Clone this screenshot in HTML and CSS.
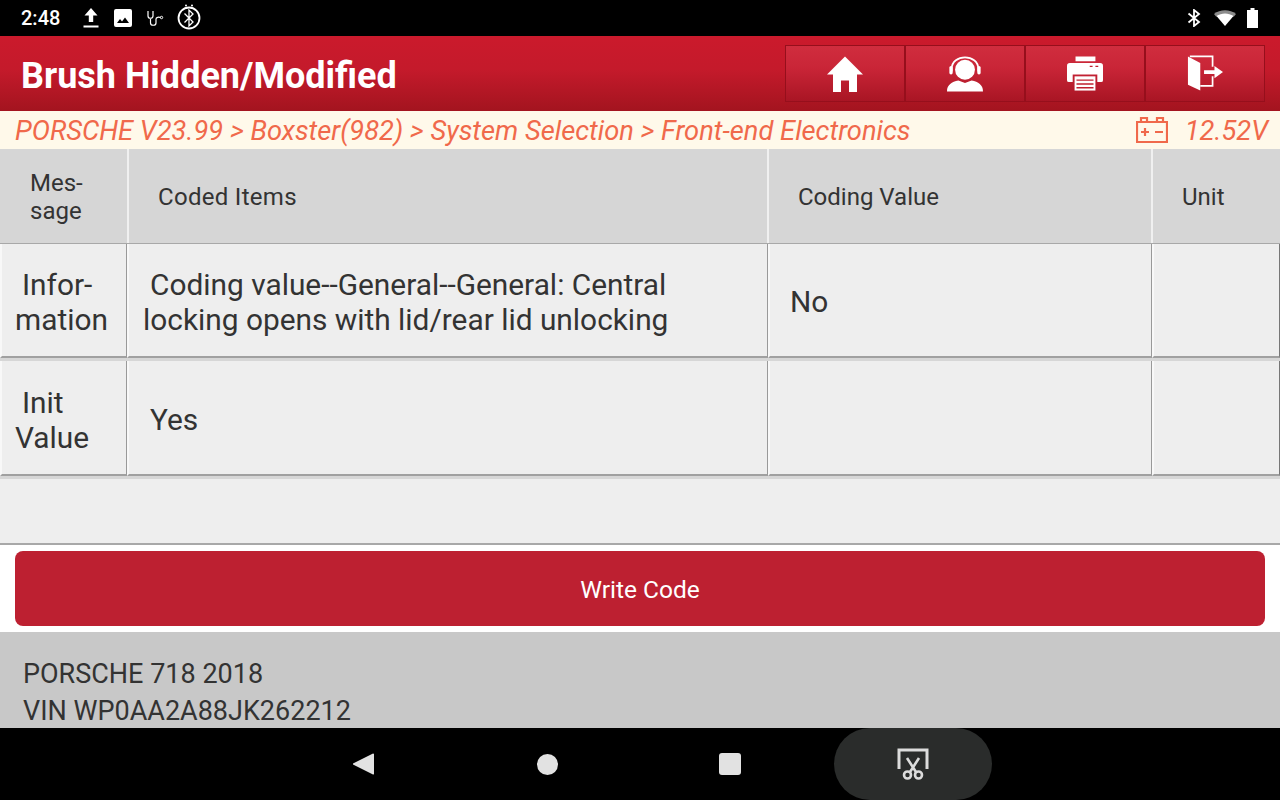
FILE: index.html
```html
<!DOCTYPE html>
<html lang="en">
<head>
<meta charset="utf-8">
<title>Brush Hidden/Modified</title>
<link rel="stylesheet" href="styles.css">
</head>
<body>
<div class="screen">
  <div class="status">
    <span class="clock">2:48</span>
    <svg class="si upload" viewBox="0 0 18 20"><path fill="#fff" d="M9 0 15.500 7.500H11.200V14H6.800V7.500H2.500ZM1.500 17.500H16.500V19.500H1.500Z"/></svg>
    <svg class="si photo" viewBox="0 0 18 18"><path fill="#fff" fill-rule="evenodd" d="M2 0H16A2 2 0 0 1 18 2V16A2 2 0 0 1 16 18H2A2 2 0 0 1 0 16V2A2 2 0 0 1 2 0ZM3 14H15L11 8.500 8 12.500 6 10Z"/></svg>
    <svg class="si steth" viewBox="0 0 18 18"><path fill="none" stroke="#fff" stroke-width="1.200" d="M2 2V7C2 10 7 10 7 7V2M4.500 10V14C4.500 17 10 17 10 14V10C10 8 13 8 14.500 8.500"/><circle cx="15.500" cy="8.500" r="1.200" fill="none" stroke="#fff"/></svg>
    <svg class="si bt-ring" viewBox="0 0 24 26"><circle cx="12" cy="14" r="10.500" fill="none" stroke="#fff" stroke-width="1.800"/><path fill="none" stroke="#fff" stroke-width="1.300" d="M7.500 9.500 16 18 12 22V6L16 10 7.500 18.500"/><circle cx="9" cy="1.500" r="1" fill="#fff"/><circle cx="15" cy="1.500" r="1" fill="#fff"/></svg>
    <span class="grow"></span>
    <svg class="si bt" viewBox="0 0 13 18"><path fill="none" stroke="#fff" stroke-width="1.800" d="M1 4.500 11.500 13 6.500 17V1L11.500 5 1 13.500"/></svg>
    <svg class="si wifi" viewBox="0 0 22 16"><path fill="#8c8c8c" d="M0 4C6-1 16-1 22 4L20 6.500H2Z"/><path fill="#fff" d="M2.500 6C7.500 2.500 14.500 2.500 19.500 6L11 16Z"/></svg>
    <svg class="si batt" viewBox="0 0 11 20"><path fill="#fff" d="M3.500 0H7.500V2H11V20H0V2H3.500Z"/></svg>
  </div>

  <header class="appbar">
    <h1 class="title">Brush Hidden/Modified</h1>
    <div class="tools">
      <div class="tool"><svg class="ti" viewBox="0 0 36 36"><path fill="#fff" d="M18 1 36 19H30V37H22V25H14V37H6V19H0Z"/></svg></div>
      <div class="tool"><svg class="ti" viewBox="0 0 38 38"><circle cx="19" cy="15" r="10.500" fill="#fff"/><path fill="none" stroke="#fff" stroke-width="1.800" d="M5 17V14C5 -2 33 -2 33 14V17"/><rect x="2.500" y="11" width="3.500" height="9" rx="1.700" fill="#fff"/><rect x="32" y="11" width="3.500" height="9" rx="1.700" fill="#fff"/><path fill="#fff" d="M0 38C0 31 5 28 12 26.500L19 29 26 26.500C33 28 38 31 38 38Z"/></svg></div>
      <div class="tool"><svg class="ti" viewBox="0 0 38 38"><path fill="#fff" d="M9 1H30V6H9ZM3 8H35A3 3 0 0 1 38 11V26A2 2 0 0 1 36 28H32V20H6V28H2A2 2 0 0 1 0 26V11A3 3 0 0 1 3 8Z"/><path fill="#fff" d="M8 22H30V37H8Z"/><path stroke="#c0202f" stroke-width="1.500" d="M10 26H28M10 30H28M10 34H28M24 11.500H27M30 11.500H33"/></svg></div>
      <div class="tool"><svg class="ti" viewBox="0 0 38 38"><path fill="#fff" d="M1 1 14 8V37L1 31Z"/><path fill="none" stroke="#fff" stroke-width="1.800" d="M3 1H27V12M27 22V32H14"/><path fill="#fff" d="M18 15.500H29V11L38 17.500 29 24V19.500H18Z"/></svg></div>
    </div>
  </header>

  <div class="crumb">
    <span class="path">PORSCHE V23.99 &gt; Boxster(982) &gt; System Selection &gt; Front-end Electronics</span>
    <span class="volt">
      <svg class="bat" viewBox="0 0 32 26"><path fill="none" stroke="#f0694b" stroke-width="2.200" d="M1 5H31V25H1ZM5 5V1H11V5M21 5V1H27V5M5 15H13M9 11V19M19 15H27"/></svg>
      <span>12.52V</span>
    </span>
  </div>

  <div class="thead">
    <div class="hc hc1"><span class="hc1t">Mes-<br>sage</span></div>
    <div class="hc hc2">Coded Items</div>
    <div class="hc hc3">Coding Value</div>
    <div class="hc hc4">Unit</div>
  </div>

  <div class="row">
    <div class="c c1"><span class="lbl"><span class="ind1">Infor-</span><br>mation</span></div>
    <div class="c c2"><span class="txt"><span class="ind2">Coding value--General--General: Central</span><br>locking opens with lid/rear lid unlocking</span></div>
    <div class="c c3"><span class="val">No</span></div>
    <div class="c c4"></div>
  </div>
  <div class="row row2">
    <div class="c c1"><span class="lbl"><span class="ind3">Init</span><br>Value</span></div>
    <div class="c c2"><span class="ind2">Yes</span></div>
    <div class="c c3"></div>
    <div class="c c4"></div>
  </div>
  <div class="empty"></div>

  <div class="action"><button class="write">Write Code</button></div>

  <div class="info">
    <div>PORSCHE 718 2018</div>
    <div>VIN WP0AA2A88JK262212</div>
  </div>

  <nav class="nav">
    <div class="navset">
      <svg class="back" viewBox="0 0 22 24"><path fill="#e2e2e2" d="M20 1.500A1 1 0 0 1 21 2V22A1 1 0 0 1 20 22.500L1 13A1 1 0 0 1 1 11Z"/></svg>
      <span class="dot"></span>
      <span class="sq"></span>
    </div>
    <div class="pill">
      <svg class="cut" viewBox="0 0 32 32"><path fill="none" stroke="#dcdcdc" stroke-width="3" d="M2 21V2H30V21"/><path fill="none" stroke="#dcdcdc" stroke-width="2.600" d="M10 10 19 24M22 10 13 24"/><circle cx="10.500" cy="27" r="3.500" fill="none" stroke="#dcdcdc" stroke-width="2.600"/><circle cx="21.500" cy="27" r="3.500" fill="none" stroke="#dcdcdc" stroke-width="2.600"/></svg>
    </div>
  </nav>
</div>
</body>
</html>
```
FILE: styles.css
```css
* { box-sizing: border-box; }
html, body { margin: 0; padding: 0; }
body { font-family: Roboto, "Liberation Sans", sans-serif; background: #000; }
.screen { width: 1280px; height: 800px; display: flex; flex-direction: column; overflow: hidden; background: #fff; }

.status { height: 36px; background: #000; display: flex; align-items: center; padding-left: 21px; padding-right: 22px; color: #fff; flex: none; }
.clock { font-size: 20px; font-weight: 500; width: 61px; }
.si { display: block; flex: none; }
.upload { width: 18px; height: 20px; margin-right: 15px; }
.photo { width: 18px; height: 18px; margin-right: 14px; margin-left: -1px; }
.steth { width: 18px; height: 18px; margin-right: 13px; }
.bt-ring { width: 24px; height: 26px; margin-top: -2px; }
.grow { flex: 1; }
.bt { width: 14px; height: 18px; margin-right: 13px; }
.wifi { width: 22px; height: 16px; margin-right: 11px; }
.batt { width: 11px; height: 20px; }

.appbar { height: 75px; flex: none; display: flex; align-items: center; justify-content: space-between; padding: 0 15px 0 21px; background: linear-gradient(#cb1a2c 0%, #c41a2b 45%, #a3141f 100%); }
.title { margin: 0; padding-top: 5px; color: #fff; font-size: 36px; font-weight: 700; }
.tools { display: flex; }
.tool { width: 120px; height: 57px; display: flex; align-items: center; justify-content: center; border: 1px solid #960f1c; background: linear-gradient(#d02d3e, #c92537 40%, #a91524); }
.ti { width: 36px; height: 37px; display: block; }

.crumb { height: 38px; flex: none; background: #fff9ea; display: flex; align-items: center; justify-content: space-between; padding: 2px 12px 0 15px; color: #f0694b; font-style: italic; font-size: 27.300px; }
.volt { display: flex; align-items: center; gap: 17px; }
.bat { width: 32px; height: 26px; display: block; margin-top: -2px; }

.thead { height: 95px; flex: none; display: grid; grid-template-columns: 129px 640px 384px 127px; background: #d6d6d6; border-bottom: 1px solid #a8a8a8; }
.hc { display: flex; align-items: center; font-size: 24px; color: #333; border-right: 2px solid #f0f0f0; padding-top: 2px; padding-left: 29px; }
.hc4 { border-right: 0; }
.hc1 { line-height: 28px; padding-left: 30px; }
.hc2 { letter-spacing: 0.300px; }

.row { height: 117px; flex: none; display: grid; grid-template-columns: 127px 641px 384px 128px; background: #d6d6d6; padding-bottom: 3px; }
.row2 { height: 118px; }
.c { display: flex; align-items: center; background: #eee; font-size: 29.850px; color: #333; line-height: 35px; padding-top: 4px; border-right: 1px solid #999; border-bottom: 2px solid #a0a0a0; border-left: 2px solid #f8f8f8; }
.c4 { border-right: 1px solid #777; }
.c1 { padding-left: 13px; }
.c2 { padding-left: 14px; }
.c3 { padding-left: 20px; }
.val { margin-top: -2px; }
.ind1, .ind2, .ind3 { padding-left: 7px; }

.empty { height: 66px; flex: none; background: #eee; border-bottom: 2px solid #a8a8a8; }

.action { height: 87px; flex: none; padding: 6px 15px; background: #fff; }
.write { width: 100%; height: 75px; display: block; border: 0; border-radius: 8px; background: #bd2031; color: #fff; font-family: Roboto, sans-serif; font-size: 24.500px; padding: 2px 0 0; }

.info { height: 96px; flex: none; background: #c8c8c8; padding: 24px 0 0 23px; color: #333; font-size: 27px; line-height: 37px; }

.nav { height: 72px; flex: none; background: #000; position: relative; display: flex; justify-content: center; }
.navset { display: flex; align-items: center; }
.back { width: 22px; height: 24px; position: absolute; left: 353px; top: 24px; }
.dot { width: 21px; height: 21px; border-radius: 50%; background: #e2e2e2; position: absolute; left: 537px; top: 26px; }
.sq { width: 22px; height: 22px; border-radius: 3px; background: #e2e2e2; position: absolute; left: 719px; top: 25px; }
.pill { position: absolute; left: 834px; top: 0; width: 158px; height: 72px; border-radius: 36px; background: #2a2c2b; display: flex; align-items: center; justify-content: center; }
.cut { width: 32px; height: 32px; display: block; }
```
